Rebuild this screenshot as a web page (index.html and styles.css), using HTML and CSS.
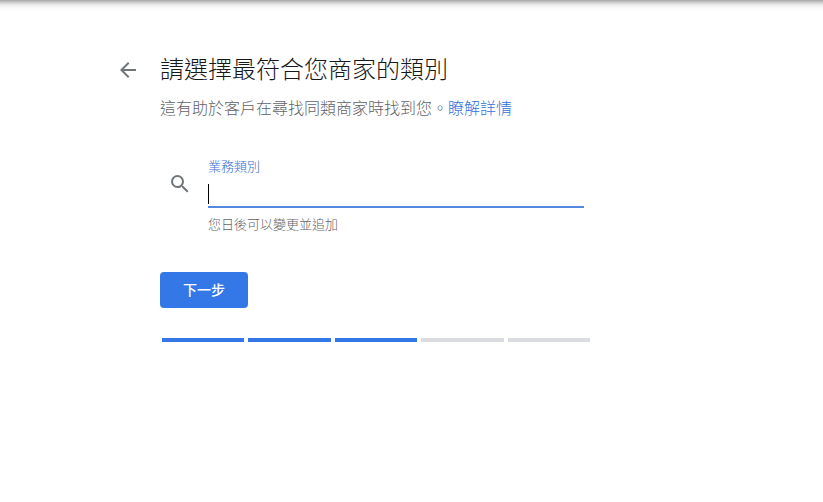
FILE: index.html
```html
<!DOCTYPE html>
<html lang="zh-Hant">
<head>
<meta charset="utf-8">
<title>請選擇最符合您商家的類別</title>
<link rel="stylesheet" href="styles.css">
</head>
<body>
<div class="topshade"></div>
<main class="page">
  <header class="head">
    <svg class="back" viewBox="0 0 24 24" width="24" height="24"><path d="M20 11H7.83l5.59-5.59L12 4l-8 8 8 8 1.41-1.41L7.83 13H20z"/></svg>
    <h1 class="title">請選擇最符合您商家的類別</h1>
  </header>
  <p class="sub">這有助於客戶在尋找同類商家時找到您。<a class="link" href="#">瞭解詳情</a></p>
  <div class="field">
    <svg class="search" viewBox="0 0 24 24" width="24" height="24"><path d="M15.5 14h-.79l-.28-.27A6.47 6.47 0 0 0 16 9.5 6.5 6.5 0 1 0 9.5 16c1.61 0 3.09-.59 4.23-1.57l.27.28v.79l5 4.99L20.49 19l-4.99-5zm-6 0C7.01 14 5 11.99 5 9.5S7.01 5 9.5 5 14 7.01 14 9.5 11.99 14 9.5 14z"/></svg>
    <div class="control">
      <div class="label">業務類別</div>
      <div class="input"><span class="caret"></span></div>
      <div class="hint">您日後可以變更並追加</div>
    </div>
  </div>
  <button class="next" type="button">下一步</button>
  <div class="progress">
    <span class="seg on"></span>
    <span class="seg on"></span>
    <span class="seg on"></span>
    <span class="seg"></span>
    <span class="seg"></span>
  </div>
</main>
</body>
</html>
```
FILE: styles.css
```css
* { box-sizing: border-box; }
html, body { margin: 0; height: 100%; }
body {
  background: #fff;
  font-family: Roboto, "Noto Sans CJK TC", "Liberation Sans", sans-serif;
  overflow: hidden;
}
.topshade {
  height: 12px;
  background: linear-gradient(#a4a4a4 0, #c8c8c8 2px, #ececec 5px, #fafafa 8px, #fff 12px);
}
.page { padding: 43px 0 0 116px; width: 640px; }
.head { display: flex; align-items: center; height: 30px; }
.back { fill: #70757a; flex: none; }
.title {
  margin: 0 0 0 20px;
  font-size: 24px;
  line-height: 30px;
  font-weight: 300;
  color: #17181a;
}
.sub {
  margin: 13px 0 0 44px;
  font-size: 16px;
  line-height: 22px;
  font-weight: 300;
  color: #5f6368;
  white-space: nowrap;
}
.link { color: #2f72dc; text-decoration: none; }
.field { display: flex; margin: 38px 0 0 44px; }
.search { fill: #70757a; flex: none; margin: 14px 0 0 8px; }
.control { margin-left: 16px; width: 376px; }
.label { font-size: 13px; line-height: 18px; font-weight: 300; color: #2f6fd6; }
.input {
  height: 32px;
  border-bottom: 2px solid #5587de;
  padding-top: 8px;
}
.caret { display: block; width: 1px; height: 20px; background: #000; }
.hint { margin-top: 8px; font-size: 13px; line-height: 18px; font-weight: 300; color: #5f6368; }
.next {
  display: block;
  margin: 38px 0 0 44px;
  width: 88px;
  height: 36px;
  border: 0;
  border-radius: 4px;
  background: #3378e6;
  color: #fff;
  font: 500 14px/34px Roboto, "Noto Sans CJK TC", sans-serif;
  padding: 0;
}
.progress { display: flex; gap: 4px; margin: 30px 0 0 46px; width: 428px; }
.seg { flex: 1; height: 4px; background: #dadce0; }
.seg.on { background: #3378e6; }
```
